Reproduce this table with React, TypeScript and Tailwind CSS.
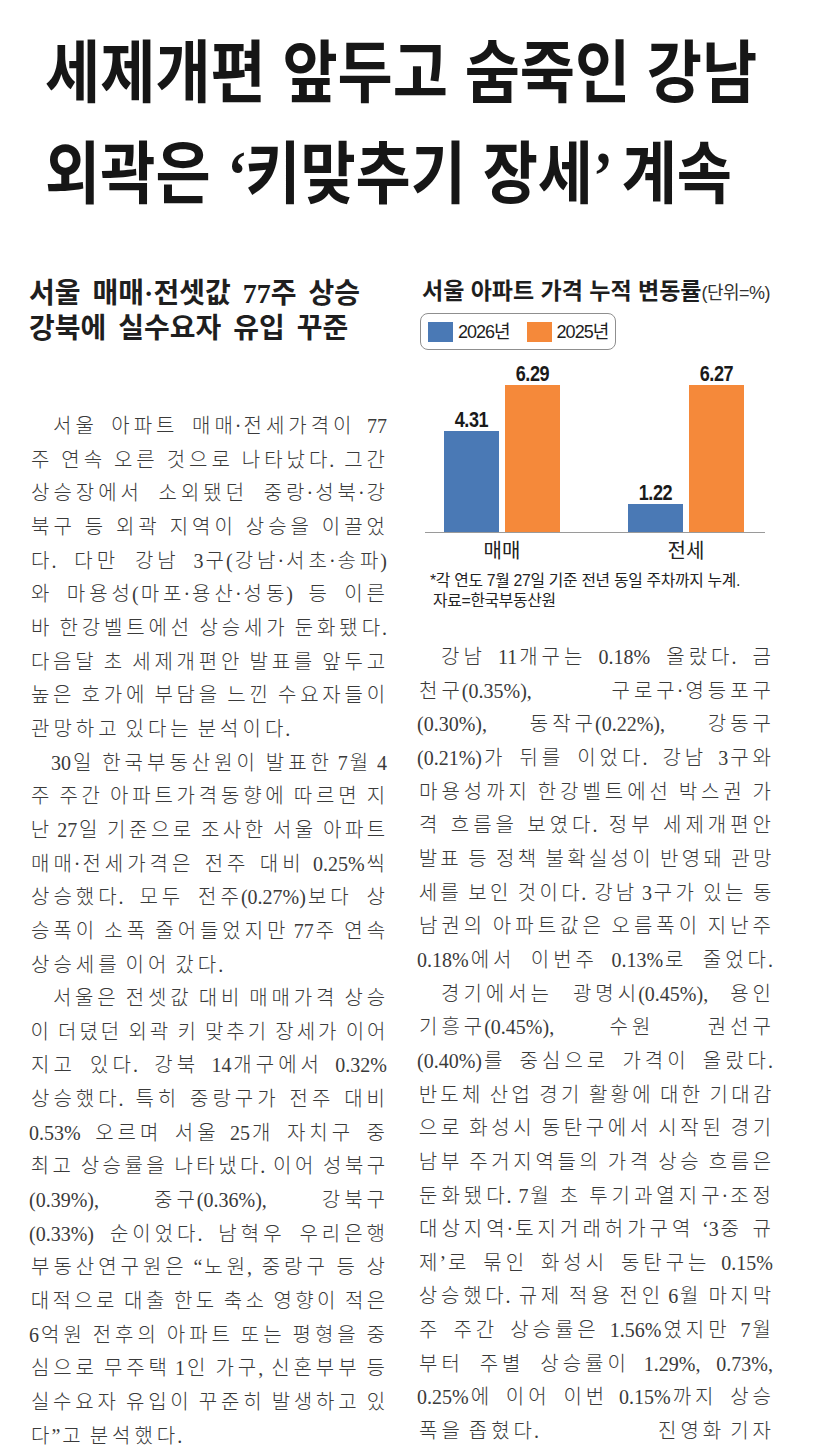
import React from "react";

type Ln = { t: string; j?: boolean; i?: boolean };

const leftCol: Ln[][] = [
  [
    { t: "서울 아파트 매매·전세가격이 77", j: true, i: true },
    { t: "주 연속 오른 것으로 나타났다. 그간", j: true },
    { t: "상승장에서 소외됐던 중랑·성북·강", j: true },
    { t: "북구 등 외곽 지역이 상승을 이끌었", j: true },
    { t: "다. 다만 강남 3구(강남·서초·송파)", j: true },
    { t: "와 마용성(마포·용산·성동) 등 이른", j: true },
    { t: "바 한강벨트에선 상승세가 둔화됐다.", j: true },
    { t: "다음달 초 세제개편안 발표를 앞두고", j: true },
    { t: "높은 호가에 부담을 느낀 수요자들이", j: true },
    { t: "관망하고 있다는 분석이다." },
  ],
  [
    { t: "30일 한국부동산원이 발표한 7월 4", j: true, i: true },
    { t: "주 주간 아파트가격동향에 따르면 지", j: true },
    { t: "난 27일 기준으로 조사한 서울 아파트", j: true },
    { t: "매매·전세가격은 전주 대비 0.25%씩", j: true },
    { t: "상승했다. 모두 전주(0.27%)보다 상", j: true },
    { t: "승폭이 소폭 줄어들었지만 77주 연속", j: true },
    { t: "상승세를 이어 갔다." },
  ],
  [
    { t: "서울은 전셋값 대비 매매가격 상승", j: true, i: true },
    { t: "이 더뎠던 외곽 키 맞추기 장세가 이어", j: true },
    { t: "지고 있다. 강북 14개구에서 0.32%", j: true },
    { t: "상승했다. 특히 중랑구가 전주 대비", j: true },
    { t: "0.53% 오르며 서울 25개 자치구 중", j: true },
    { t: "최고 상승률을 나타냈다. 이어 성북구", j: true },
    { t: "(0.39%), 중구(0.36%), 강북구", j: true },
    { t: "(0.33%) 순이었다. 남혁우 우리은행", j: true },
    { t: "부동산연구원은 “노원, 중랑구 등 상", j: true },
    { t: "대적으로 대출 한도 축소 영향이 적은", j: true },
    { t: "6억원 전후의 아파트 또는 평형을 중", j: true },
    { t: "심으로 무주택 1인 가구, 신혼부부 등", j: true },
    { t: "실수요자 유입이 꾸준히 발생하고 있", j: true },
    { t: "다”고 분석했다." },
  ],
];

const rightCol: Ln[][] = [
  [
    { t: "강남 11개구는 0.18% 올랐다. 금", j: true, i: true },
    { t: "천구(0.35%), 구로구·영등포구", j: true },
    { t: "(0.30%), 동작구(0.22%), 강동구", j: true },
    { t: "(0.21%)가 뒤를 이었다. 강남 3구와", j: true },
    { t: "마용성까지 한강벨트에선 박스권 가", j: true },
    { t: "격 흐름을 보였다. 정부 세제개편안", j: true },
    { t: "발표 등 정책 불확실성이 반영돼 관망", j: true },
    { t: "세를 보인 것이다. 강남 3구가 있는 동", j: true },
    { t: "남권의 아파트값은 오름폭이 지난주", j: true },
    { t: "0.18%에서 이번주 0.13%로 줄었다.", j: true },
  ],
  [
    { t: "경기에서는 광명시(0.45%), 용인", j: true, i: true },
    { t: "기흥구(0.45%), 수원 권선구", j: true },
    { t: "(0.40%)를 중심으로 가격이 올랐다.", j: true },
    { t: "반도체 산업 경기 활황에 대한 기대감", j: true },
    { t: "으로 화성시 동탄구에서 시작된 경기", j: true },
    { t: "남부 주거지역들의 가격 상승 흐름은", j: true },
    { t: "둔화됐다. 7월 초 투기과열지구·조정", j: true },
    { t: "대상지역·토지거래허가구역 ‘3중 규", j: true },
    { t: "제’로 묶인 화성시 동탄구는 0.15%", j: true },
    { t: "상승했다. 규제 적용 전인 6월 마지막", j: true },
    { t: "주 주간 상승률은 1.56%였지만 7월", j: true },
    { t: "부터 주별 상승률이 1.29%, 0.73%,", j: true },
    { t: "0.25%에 이어 이번 0.15%까지 상승", j: true },
  ],
];

const bars = [
  { cat: "매매", a: 4.31, b: 6.29 },
  { cat: "전세", a: 1.22, b: 6.27 },
];
const PX = 23.37;

const HANGUL = /[가-힣]/;
const CELL = 22.4;
const LAT: Record<string, number> = {
  ".": 5, ",": 5, "%": 16.66, "(": 6.66, ")": 6.66, "·": 5,
  "“": 8.88, "”": 8.88, "‘": 6.66, "’": 6.66,
};

// squeeze Hangul cells on long lines so the justified line still fits
function cellFor(t: string, width: number) {
  const chars = Array.from(t);
  const nH = chars.filter((c) => HANGUL.test(c)).length;
  const nSp = chars.filter((c) => c === " ").length;
  const lat = chars
    .filter((c) => c !== " " && !HANGUL.test(c))
    .reduce((s, c) => s + (/[0-9]/.test(c) ? 10 : LAT[c] ?? 10), 0);
  if (!nH) return CELL;
  return Math.min(CELL, (width - lat - nSp * 6 - 1) / nH);
}

function Runs({ s, w }: { s: string; w: number }) {
  return (
    <>
      {Array.from(s).map((c, k) =>
        HANGUL.test(c) ? (
          <span key={k} className="inline-block text-center" style={{ width: w }}>
            {c}
          </span>
        ) : (
          <React.Fragment key={k}>{c}</React.Fragment>
        )
      )}
    </>
  );
}

function Line({ t, j, i, width }: Ln & { width: number }) {
  const w = j ? cellFor(t, width - (i ? 22 : 0)) : CELL;
  if (j) {
    return (
      <div className={`flex justify-between whitespace-nowrap ${i ? "pl-[22px]" : ""}`}>
        {t.split(" ").map((word, k) => (
          <span key={k}>
            <Runs s={word} w={w} />
          </span>
        ))}
      </div>
    );
  }
  return (
    <div className={`whitespace-pre ${i ? "pl-[22px]" : ""}`}>
      <Runs s={t} w={w} />
    </div>
  );
}

function Body({ paras, width, children }: { paras: Ln[][]; width: number; children?: React.ReactNode }) {
  return (
    <div className="[font-family:'Liberation_Serif','Noto_Sans_CJK_KR',serif] font-light text-[20px] leading-[33.65px] text-[#3a3a3a]">
      {paras.map((p, k) => (
        <div key={k}>
          {p.map((l, n) => (
            <Line key={n} {...l} width={width} />
          ))}
        </div>
      ))}
      {children}
    </div>
  );
}

function Chart() {
  return (
    <div className="h-[371px] [font-family:'Liberation_Sans','Noto_Sans_CJK_KR',sans-serif] text-[#1e1e1e]">
      <div className="h-[43px] pt-[7px] pl-[5px] flex items-baseline leading-[28px]">
        <span className="text-[23px] font-bold">서울 아파트 가격 누적 변동률</span>
        <span className="text-[18px] tracking-[-0.5px] text-[#333]">(단위=%)</span>
      </div>

      <div className="ml-[3px] flex w-fit items-center h-[37px] box-border border-[1.5px] border-[#8f8f8f] rounded-[8px] pl-[7px] pr-[7px]">
        <span className="w-[25px] h-[20px] bg-[#4a79b5]" />
        <span className="ml-[5px] text-[18px] leading-[20px] tracking-[-1px]">2026년</span>
        <span className="ml-[17px] w-[25px] h-[20px] bg-[#f5893a]" />
        <span className="ml-[5px] text-[18px] leading-[20px] tracking-[-1px]">2025년</span>
      </div>

      <div className="ml-[8px] w-[340px] h-[183px] box-border border-b border-[#9a9a9a] flex items-end pl-[19px] gap-[68px]">
        {bars.map((g) => (
          <div key={g.cat} className="flex items-end gap-[6px]">
            {[
              { v: g.a, c: "bg-[#4a79b5]" },
              { v: g.b, c: "bg-[#f5893a]" },
            ].map((b, k) => (
              <div key={k} className="flex flex-col items-center">
                <span className="inline-block scale-x-[0.82] text-[22px] leading-[20px] font-bold mb-[1px] tracking-[-0.5px] text-[#1a1a1a]">
                  {b.v.toFixed(2)}
                </span>
                <div className={`w-[55px] ${b.c}`} style={{ height: b.v * PX }} />
              </div>
            ))}
          </div>
        ))}
      </div>

      <div className="ml-[8px] w-[340px] flex pl-[19px] gap-[68px] pt-[6px]">
        {bars.map((g) => (
          <div key={g.cat} className="w-[116px] text-center text-[20px] leading-[24px] text-[#222]">
            {g.cat}
          </div>
        ))}
      </div>

      <div className="mt-[8px] pl-[13px] text-[15.8px] leading-[20px] tracking-[-0.3px] text-[#222]">
        <div>*각 연도 7월 27일 기준 전년 동일 주차까지 누계.</div>
        <div className="pl-[3px]">자료=한국부동산원</div>
      </div>
    </div>
  );
}

export default function App() {
  return (
    <div className="min-h-[1456px] w-[827px] bg-white overflow-hidden">
      {/* Headline */}
      <h1 className="h-[219px] pt-[17px] pl-[45px] [font-family:'Noto_Sans_CJK_KR',sans-serif] font-bold text-[60px] leading-[101px] [word-spacing:3px] text-[#161616]">
        <div className="scale-y-[1.13]">세제개편 앞두고 숨죽인 강남</div>
        <div className="scale-y-[1.13]">
          외곽은 <span className="[font-family:'Liberation_Serif',serif] tracking-[-2px]">‘</span>키맞추기 장세
          <span className="[font-family:'Liberation_Serif',serif] tracking-[-8px]">’</span> 계속
        </div>
      </h1>

      <div className="mt-[51px] pl-[29px] grid grid-cols-[358px_356px] gap-[30px]">
        {/* Left column */}
        <div>
          <div className="h-[140px] pt-[6px] [font-family:'Liberation_Serif','Noto_Sans_CJK_KR',serif] font-bold text-[28px] leading-[35px] [word-spacing:5px] text-[#1f1f1f]">
            <div>서울 매매·전셋값 77주 상승</div>
            <div>강북에 실수요자 유입 꾸준</div>
          </div>
          <Body paras={leftCol} width={358} />
        </div>

        {/* Right column */}
        <div>
          <Chart />
          <Body paras={rightCol} width={356}>
            <div className="flex justify-between whitespace-nowrap">
              <span>
                <Runs s="폭을 좁혔다." w={CELL} />
              </span>
              <span>
                <Runs s="진영화 기자" w={CELL} />
              </span>
            </div>
          </Body>
        </div>
      </div>
    </div>
  );
}
